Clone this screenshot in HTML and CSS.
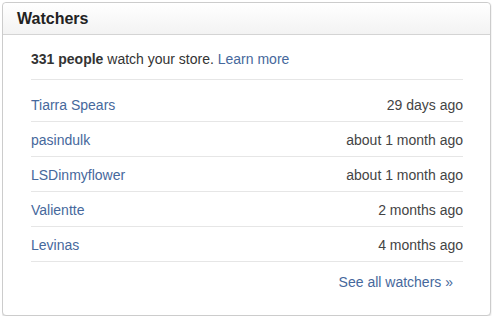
FILE: index.html
```html
<!DOCTYPE html>
<html lang="en">
<head>
  <meta charset="UTF-8" />
  <title>Watchers</title>
  <link rel="stylesheet" href="styles.css">
</head>
<body>
  <div class="panel">
    <div class="panel-heading">Watchers</div>
    <div class="panel-body">
      <p class="summary"><strong>331 people</strong> watch your store. <a href="#">Learn more</a></p>
      <ul class="watchers">
        <li><a href="#">Tiarra Spears</a><span>29 days ago</span></li>
        <li><a href="#">pasindulk</a><span>about 1 month ago</span></li>
        <li><a href="#">LSDinmyflower</a><span>about 1 month ago</span></li>
        <li><a href="#">Valientte</a><span>2 months ago</span></li>
        <li><a href="#">Levinas</a><span>4 months ago</span></li>
      </ul>
      <div class="more"><a href="#">See all watchers &raquo;</a></div>
    </div>
  </div>
</body>
</html>
```

FILE: styles.css
```css
body {
  margin: 2px;
  background: #fff;
  font-family: Arial, "Liberation Sans", sans-serif;
  font-size: 14px;
  color: #333;
}
a {
  color: #46689c;
  text-decoration: none;
}
.panel {
  width: 487px;
  border: 1px solid #ccc;
  border-radius: 4px;
  box-shadow: 0 1px 2px rgba(0,0,0,0.15);
  background: #fff;
}
.panel-heading {
  height: 31px;
  line-height: 31px;
  padding-left: 14px;
  font-size: 16px;
  font-weight: bold;
  color: #222;
  border-bottom: 1px solid #d4d4d4;
  border-radius: 4px 4px 0 0;
  background: linear-gradient(#fff, #f3f3f3);
}
.panel-body {
  padding: 14px 27px 23px 28px;
}
.summary {
  margin: 0;
  padding-bottom: 10px;
  line-height: 20px;
  border-bottom: 1px solid #e6e6e6;
}
.summary strong {
  color: #333;
}
.watchers {
  list-style: none;
  margin: 0;
  padding: 7px 0 0;
}
.watchers li {
  display: flex;
  justify-content: space-between;
  padding: 8px 0 6px;
  line-height: 20px;
  border-bottom: 1px solid #e6e6e6;
}
.watchers span {
  color: #444;
}
.more {
  text-align: right;
  padding: 10px 10px 0 0;
  line-height: 20px;
}
```
